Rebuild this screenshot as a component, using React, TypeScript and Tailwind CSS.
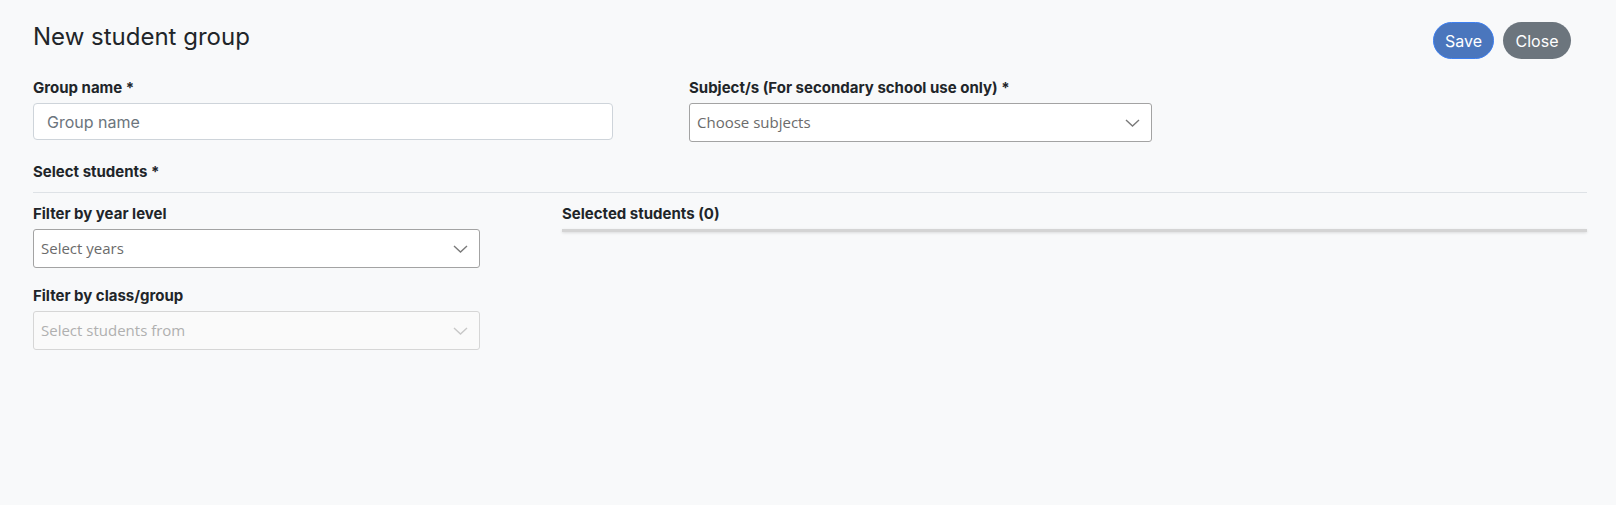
import React from "react";

const Chevron = ({ light }: { light?: boolean }) => (
  <svg width="15" height="8" viewBox="0 0 15 8" fill="none">
    <path d="M1 1L7.5 7L14 1" stroke={light ? "#c8c8c8" : "#7a7a7a"} strokeWidth="1.4" />
  </svg>
);

const Label = ({ children }: { children: React.ReactNode }) => (
  <div className="text-[15px] leading-[20px] font-bold text-[#212529]">{children}</div>
);

const SelectBox = ({
  text,
  disabled,
  className,
}: {
  text: string;
  disabled?: boolean;
  className: string;
}) => (
  <div
    className={
      "flex items-center justify-between rounded-[3px] border pl-[7px] pr-[11px] " +
      (disabled ? "border-[#d6d6d6] bg-[#fafafa] " : "border-[#a3a3a3] bg-white ") +
      className
    }
  >
    <span
      className={
        "text-[15px] " + (disabled ? "text-[#b0b0b0]" : "text-[#6b6b6b]")
      }
      style={{ fontFamily: '"Open Sans", "Noto Sans", sans-serif' }}
    >
      {text}
    </span>
    <Chevron light={disabled} />
  </div>
);

export default function App() {
  return (
    <div
      className="min-h-screen w-full bg-[#f8f9fa] pl-[33px] pr-[29px] text-[#212529]"
      style={{ fontFamily: 'Inter, "Noto Sans", sans-serif' }}
    >
      <div className="flex items-start justify-between pt-[22px] pr-[16px]">
        <h1 className="mt-[1px] text-[24px] leading-[28px] font-normal text-[#212529]">New student group</h1>
        <div className="flex gap-[9px]">
          <button className="h-[37px] w-[61px] rounded-full border border-[#3d7ff0] bg-[#4a76bd] text-[16px] text-white">
            Save
          </button>
          <button className="h-[37px] w-[68px] rounded-full bg-[#6c757d] text-[16px] text-white">
            Close
          </button>
        </div>
      </div>

      <div className="mt-[19px] flex">
        <div className="w-[580px]">
          <Label>Group name *</Label>
          <div className="mt-[5px] flex h-[37px] items-center rounded-[4px] border border-[#ced4da] bg-white pl-[13px] text-[16px] text-[#6c757d]">
            Group name
          </div>
        </div>
        <div className="ml-[76px] w-[463px]">
          <Label>Subject/s (For secondary school use only) *</Label>
          <SelectBox text="Choose subjects" className="mt-[5px] h-[39px]" />
        </div>
      </div>

      <div className="mt-[20px]">
        <Label>Select students *</Label>
      </div>
      <div className="mt-[10px] h-px bg-[#dee2e6]" />

      <div className="mt-[11px] flex">
        <div className="w-[447px]">
          <Label>Filter by year level</Label>
          <SelectBox text="Select years" className="mt-[5px] h-[39px]" />
          <div className="mt-[18px]">
            <Label>Filter by class/group</Label>
          </div>
          <SelectBox text="Select students from" disabled className="mt-[5px] h-[39px]" />
        </div>
        <div className="ml-[82px] flex-1">
          <Label>Selected students (0)</Label>
          <div className="mt-[5px] h-[3px] bg-[#d4d4d4] shadow-[0_1px_3px_rgba(0,0,0,0.12)]" />
        </div>
      </div>
    </div>
  );
}
